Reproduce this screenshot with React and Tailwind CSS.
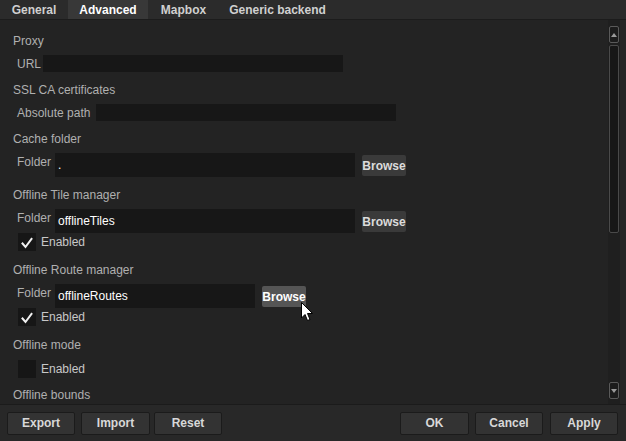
import React from "react";

const font = "font-['Liberation_Sans',Arial,sans-serif]";

function SectionLabel({ children, mt }) {
  return (
    <div className={`h-[16px] leading-[16px] text-[12px] text-[#b0b0b0] ${mt}`}>{children}</div>
  );
}

function TextRow({ label, labelW, inputW, mt }) {
  return (
    <div className={`flex items-center h-[17px] pl-[4px] ${mt}`}>
      <span className={`text-[12px] leading-[16px] text-[#b0b0b0] ${labelW}`}>{label}</span>
      <div className={`h-[17px] bg-[#171717] ${inputW}`}></div>
    </div>
  );
}

function FolderRow({ value, inputW, hover, mt }) {
  return (
    <div className={`flex items-start h-[24px] pl-[4px] ${mt}`}>
      <span className="text-[12px] leading-[16px] text-[#b0b0b0] pt-[1px] w-[38px]">Folder</span>
      <div className={`h-[24px] bg-[#171717] flex items-center pl-[3px] text-[12px] text-white ${inputW}`}>
        {value}
      </div>
      <button
        className={`ml-[7px] mt-[2px] h-[21px] w-[44px] rounded-[2px] text-[12px] font-bold flex items-center justify-center ${
          hover ? "bg-[#555555] text-white" : "bg-[#3a3a3a] text-[#dcdcdc]"
        }`}
      >
        Browse
      </button>
    </div>
  );
}

function Check({ checked, mt }) {
  return (
    <div className={`flex items-center h-[18px] pl-[5px] ${mt}`}>
      <div className="w-[18px] h-[18px] bg-[#161616] flex items-center justify-center">
        {checked && (
          <svg width="18" height="18" viewBox="0 0 18 18">
            <path d="M4.5 10.5 L7.5 14 L13.5 6" fill="none" stroke="#f0f0f0" strokeWidth="2" strokeLinecap="square" />
          </svg>
        )}
      </div>
      <span className="ml-[5px] text-[12px] leading-[16px] text-[#c8c8c8]">Enabled</span>
    </div>
  );
}

function FooterBtn({ children, w }) {
  return (
    <button
      className={`h-[23px] ${w} rounded-[2px] border border-[#1b1b1b] bg-[#333333] text-[12px] font-bold text-[#d8d8d8] flex items-center justify-center`}
    >
      {children}
    </button>
  );
}

export default function App() {
  return (
    <div className={`${font} w-[626px] h-[441px] bg-[#232323] flex flex-col overflow-hidden relative`}>
      {/* Tabs */}
      <div className="h-[20px] bg-[#2b2b2b] border-b border-[#1c1c1c] flex text-[12px] font-bold text-[#d0d0d0]">
        <div className="w-[68px] flex items-center justify-center">General</div>
        <div className="w-[80px] flex items-center justify-center bg-[#383838] text-white">Advanced</div>
        <div className="w-[71px] flex items-center justify-center">Mapbox</div>
        <div className="w-[117px] flex items-center justify-center">Generic backend</div>
      </div>

      {/* Body */}
      <div className="flex-1 flex min-h-0">
        <div className="flex-1 flex flex-col pl-[13px] overflow-hidden">
          <SectionLabel mt="mt-[13px]">Proxy</SectionLabel>
          <TextRow label="URL" labelW="w-[26px]" inputW="w-[300px]" mt="mt-[6px]" />
          <SectionLabel mt="mt-[10px]">SSL CA certificates</SectionLabel>
          <TextRow label="Absolute path" labelW="w-[79px]" inputW="w-[300px]" mt="mt-[6px]" />
          <SectionLabel mt="mt-[10px]">Cache folder</SectionLabel>
          <FolderRow value="." inputW="w-[300px]" mt="mt-[6px]" />
          <SectionLabel mt="mt-[10px]">Offline Tile manager</SectionLabel>
          <FolderRow value="offlineTiles" inputW="w-[300px]" mt="mt-[6px]" />
          <Check checked mt="mt-0" />
          <SectionLabel mt="mt-[11px]">Offline Route manager</SectionLabel>
          <FolderRow value="offlineRoutes" inputW="w-[200px]" hover mt="mt-[6px]" />
          <Check checked mt="mt-0" />
          <SectionLabel mt="mt-[11px]">Offline mode</SectionLabel>
          <Check mt="mt-[7px]" />
          <SectionLabel mt="mt-[9px]">Offline bounds</SectionLabel>
        </div>

        {/* Scrollbar */}
        <div className="w-[18px] flex">
          <div className="w-[12px] bg-[#1f1f1f] flex flex-col items-center pt-[6px] pb-[5px]">
            <div className="w-[10px] h-[17px] rounded-[2px] border border-[#5a5a5a] bg-[#1c1c1c] flex items-center justify-center">
              <svg width="6" height="4" viewBox="0 0 6 4"><path d="M0 4 L3 0 L6 4 Z" fill="#9a9a9a" /></svg>
            </div>
            <div className="mt-[2px] w-[10px] h-[188px] rounded-[2px] border border-[#4a4a4a] bg-[#171717]"></div>
            <div className="flex-1"></div>
            <div className="w-[10px] h-[17px] rounded-[2px] border border-[#5a5a5a] bg-[#1c1c1c] flex items-center justify-center">
              <svg width="6" height="4" viewBox="0 0 6 4"><path d="M0 0 L6 0 L3 4 Z" fill="#9a9a9a" /></svg>
            </div>
          </div>
          <div className="flex-1 bg-[#262626]"></div>
        </div>
      </div>

      {/* Footer */}
      <div className="h-[37px] bg-[#282828] border-t border-[#1b1b1b] flex items-center pl-[7px] pr-[8px]">
        <FooterBtn w="w-[68px]">Export</FooterBtn>
        <div className="w-[6px]"></div>
        <FooterBtn w="w-[69px]">Import</FooterBtn>
        <div className="w-[4px]"></div>
        <FooterBtn w="w-[68px]">Reset</FooterBtn>
        <div className="flex-1"></div>
        <FooterBtn w="w-[69px]">OK</FooterBtn>
        <div className="w-[6px]"></div>
        <FooterBtn w="w-[68px]">Cancel</FooterBtn>
        <div className="w-[7px]"></div>
        <FooterBtn w="w-[68px]">Apply</FooterBtn>
      </div>

      {/* Mouse cursor */}
      <svg className="absolute left-[301px] top-[302px]" width="13" height="20" viewBox="0 0 13 20">
        <path d="M0.5 0.5 L0.5 16 L4 12.5 L6.5 18.5 L9 17.5 L6.5 11.5 L11.5 11.5 Z" fill="#ffffff" stroke="#000000" strokeWidth="1" strokeLinejoin="miter" />
      </svg>
    </div>
  );
}
